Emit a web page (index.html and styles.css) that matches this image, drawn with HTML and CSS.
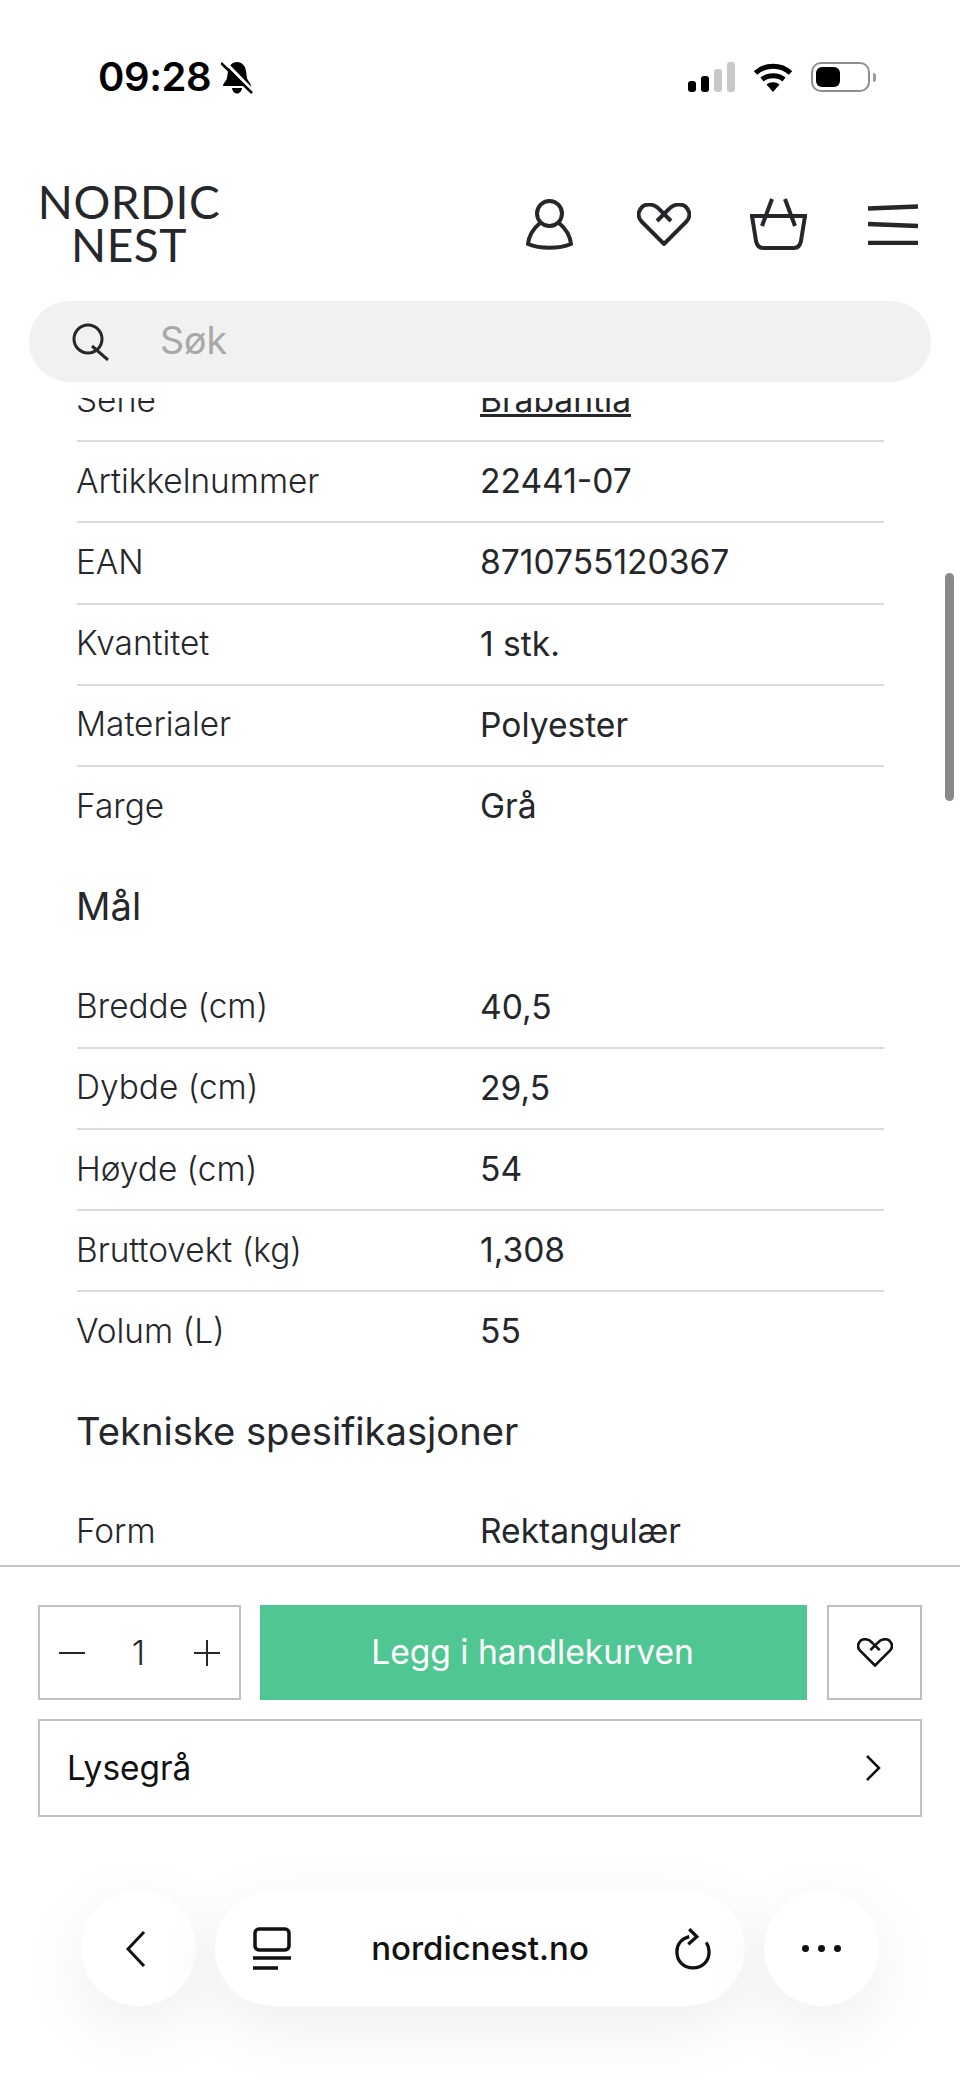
FILE: index.html
```html
<!DOCTYPE html>
<html lang="no">
<head>
    <meta charset="utf-8">
    <title>Nordic Nest</title>
    <link rel="stylesheet" href="styles.css">
</head>
<body>
    <svg class="defs" width="0" height="0">
        <symbol id="heart" viewBox="0 0 54 43">
            <path d="M34 18 L23 7 C17 0 7 0 3.5 6 C0 11 2 16 5 19 L27 41 L49 19 C52 16 54 11 50.5 6 C47 0 37 0 31 7 L20 18"/>
        </symbol>
    </svg>

    <div class="page">
        <div class="status-bar">
            <div class="status-left">
                <span class="clock">09:28</span>
                <svg class="bell" viewBox="0 0 32 33">
                    <path class="fill" d="M16 1 C21 1 24.500 5 25 10 L26 17 C26.500 20 30 22 30 25 L2 25 C2 22 5.500 20 6 17 L7 10 C7.500 5 11 1 16 1 Z M11 27 L21 27 C20.500 31 18 32.500 16 32.500 C14 32.500 11.500 31 11 27 Z"/>
                    <path class="cut" d="M3 0 L33 31"/>
                    <path class="slash" d="M0 2 L31 32"/>
                </svg>
            </div>
            <div class="status-right">
                <div class="signal">
                    <span class="bar bar-1"></span>
                    <span class="bar bar-2"></span>
                    <span class="bar bar-3"></span>
                    <span class="bar bar-4"></span>
                </div>
                <svg class="wifi" viewBox="0 0 40 30">
                    <path d="M2.500 11 C12 2 28 2 37.500 11"/>
                    <path d="M9 17.500 C15 12.500 25 12.500 31 17.500"/>
                    <path class="wifi-dot" d="M13.500 22.500 C17 19.500 23 19.500 26.500 22.500 L20 30 Z"/>
                </svg>
                <div class="battery"><span class="battery-level"></span></div>
                <span class="battery-tip"></span>
            </div>
        </div>

        <header class="site-header">
            <div class="logo">NORDIC
NEST</div>
            <nav class="header-icons">
                <svg class="icon icon-user" viewBox="0 0 47 51">
                    <circle cx="23.500" cy="14.500" r="12.500"/>
                    <path d="M14 24 C8 29 3 36 2 45 C14 50 33 50 45 45 C44 36 39 29 33 24"/>
                </svg>
                <svg class="icon icon-heart"><use href="#heart"/></svg>
                <svg class="icon icon-basket" viewBox="0 0 57 52">
                    <path d="M0 18 L57 18"/>
                    <path d="M2 18 L6 43 C7 48 9 50 13 50 L44 50 C48 50 50 48 51 43 L55 18"/>
                    <path d="M22 1 L12 28"/>
                    <path d="M35 1 L45 28"/>
                </svg>
                <svg class="icon icon-menu" viewBox="0 0 50 41">
                    <path d="M0 4.500 L50 2.500"/>
                    <path d="M0 20 L50 22"/>
                    <path d="M0 39 L50 39"/>
                </svg>
            </nav>
        </header>

        <div class="search">
            <svg class="search-icon" viewBox="0 0 38 38">
                <circle cx="16" cy="16" r="14"/>
                <path d="M20 23 L36 37"/>
            </svg>
            <span class="search-text">Søk</span>
        </div>

        <main class="specs">
            <div class="spec-row"><span class="spec-label">Serie</span><a class="spec-value spec-link">Brabantia</a></div>
            <div class="spec-row"><span class="spec-label">Artikkelnummer</span><span class="spec-value">22441-07</span></div>
            <div class="spec-row"><span class="spec-label">EAN</span><span class="spec-value">8710755120367</span></div>
            <div class="spec-row"><span class="spec-label">Kvantitet</span><span class="spec-value">1 stk.</span></div>
            <div class="spec-row"><span class="spec-label">Materialer</span><span class="spec-value">Polyester</span></div>
            <div class="spec-row"><span class="spec-label">Farge</span><span class="spec-value">Grå</span></div>

            <h2 class="spec-heading">Mål</h2>
            <div class="spec-row"><span class="spec-label">Bredde (cm)</span><span class="spec-value">40,5</span></div>
            <div class="spec-row"><span class="spec-label">Dybde (cm)</span><span class="spec-value">29,5</span></div>
            <div class="spec-row"><span class="spec-label">Høyde (cm)</span><span class="spec-value">54</span></div>
            <div class="spec-row"><span class="spec-label">Bruttovekt (kg)</span><span class="spec-value">1,308</span></div>
            <div class="spec-row"><span class="spec-label">Volum (L)</span><span class="spec-value">55</span></div>

            <h2 class="spec-heading">Tekniske spesifikasjoner</h2>
            <div class="spec-row"><span class="spec-label">Form</span><span class="spec-value">Rektangulær</span></div>
        </main>

        <div class="scrollbar"></div>

        <section class="buy-panel">
            <div class="buy-row">
                <div class="quantity">
                    <svg class="qty-icon" viewBox="0 0 26 26"><path d="M0 13 L26 13"/></svg>
                    <span class="qty-number">1</span>
                    <svg class="qty-icon" viewBox="0 0 26 26"><path d="M0 13 L26 13"/><path d="M13 0 L13 26"/></svg>
                </div>
                <button class="add-button">Legg i handlekurven</button>
                <div class="wish-button">
                    <svg class="icon icon-heart-small"><use href="#heart"/></svg>
                </div>
            </div>
            <div class="variant">
                <span>Lysegrå</span>
                <svg class="variant-arrow" viewBox="0 0 16 26"><path d="M2 1 L14 13 L2 25"/></svg>
            </div>
        </section>

        <footer class="browser-bar">
            <div class="round-button">
                <svg class="back-icon" viewBox="0 0 20 36"><path d="M18 1 L2 18 L18 35"/></svg>
            </div>
            <div class="address">
                <svg class="reader-icon" viewBox="0 0 38 43">
                    <rect x="2" y="2" width="34" height="21" rx="4"/>
                    <path d="M0 31 L38 31"/>
                    <path d="M0 41 L25 41"/>
                </svg>
                <span class="url">nordicnest.no</span>
                <svg class="reload-icon" viewBox="0 0 38 44">
                    <path d="M15 9 C7 11 2 17 2 25 C2 35 9 42 19 42 C29 42 36 35 36 25 C36 21 35 18 33 15"/>
                    <path d="M15 1 L23 9 L14 17"/>
                </svg>
            </div>
            <div class="round-button">
                <div class="dots"><span></span><span></span><span></span></div>
            </div>
        </footer>
    </div>
</body>
</html>
```

FILE: styles.css
```css
* {
    box-sizing: border-box;
}

html, body {
    margin: 0;
    padding: 0;
    background-color: #fff;
}

body {
    font-family: Inter, "Liberation Sans", sans-serif;
    color: #25272a;
}

.defs {
    display: block;
    height: 0;
}

.page {
    position: relative;
    display: flex;
    flex-direction: column;
    width: 960px;
    height: 2087px;
    overflow: hidden;
    background-color: #fff;
}

/* phone status bar */
.status-bar {
    display: flex;
    justify-content: space-between;
    align-items: center;
    height: 62px;
    margin-top: 46px;
    padding: 0 84px 0 98px;
    flex-shrink: 0;
}

.status-left {
    display: flex;
    align-items: center;
    gap: 10px;
}

.clock {
    font-size: 40px;
    font-weight: 600;
    color: #000;
    letter-spacing: -0.4px;
    line-height: 46px;
}

.bell {
    width: 32px;
    height: 33px;
}

.bell .fill {
    fill: #000;
}

.bell .cut {
    stroke: #fff;
    stroke-width: 3;
    fill: none;
}

.bell .slash {
    stroke: #000;
    stroke-width: 2.500;
    fill: none;
}

.status-right {
    display: flex;
    align-items: center;
}

.signal {
    display: flex;
    align-items: flex-end;
    gap: 4.500px;
    height: 30px;
    margin-right: 18px;
}

.bar {
    width: 8.500px;
    border-radius: 3px;
    background-color: #000;
}

.bar-1 {
    height: 11px;
}

.bar-2 {
    height: 16px;
}

.bar-3 {
    height: 23px;
    background-color: #c9c9c9;
}

.bar-4 {
    height: 30px;
    background-color: #c9c9c9;
}

.wifi {
    width: 40px;
    height: 30px;
    margin-right: 18px;
}

.wifi path {
    fill: none;
    stroke: #000;
    stroke-width: 5;
}

.wifi .wifi-dot {
    fill: #000;
    stroke: none;
}

.battery {
    width: 59px;
    height: 30px;
    padding: 3px;
    border: 2px solid #8e8e8e;
    border-radius: 10px;
}

.battery-level {
    display: block;
    width: 24px;
    height: 100%;
    border-radius: 6px;
    background-color: #000;
}

.battery-tip {
    width: 3px;
    height: 9px;
    margin-left: 3px;
    border-radius: 0 3px 3px 0;
    background-color: #9a9a9a;
}

/* site header */
.site-header {
    display: flex;
    justify-content: space-between;
    align-items: center;
    height: 84px;
    margin-top: 74px;
    padding: 0 42px 0 37px;
    flex-shrink: 0;
}

.logo {
    width: 184px;
    margin-top: -2px;
    font-family: Lato, Inter, sans-serif;
    font-size: 46px;
    line-height: 43px;
    letter-spacing: 0.5px;
    text-align: center;
    white-space: pre-line;
    color: #25272a;
}

.header-icons {
    display: flex;
    align-items: center;
}

.icon {
    display: block;
    fill: none;
    stroke: #25272a;
    stroke-width: 4;
}

.icon path, .icon circle, .icon use {
    fill: none;
}

.icon-user {
    width: 47px;
    height: 51px;
}

.icon-heart {
    width: 54px;
    height: 43px;
    margin-left: 64px;
}

.icon-basket {
    width: 57px;
    height: 52px;
    margin-left: 59px;
}

.icon-menu {
    width: 50px;
    height: 41px;
    margin-left: 61px;
    stroke-width: 4.500;
}

/* search */
.search {
    display: flex;
    align-items: center;
    height: 81px;
    margin: 35px 29px 16px 29px;
    padding-left: 43px;
    border-radius: 41px;
    background-color: #f1f1f1;
    flex-shrink: 0;
}

.search-icon {
    width: 38px;
    height: 38px;
    fill: none;
    stroke: #25272a;
    stroke-width: 3;
}

.search-text {
    margin-left: 50px;
    margin-bottom: 2px;
    font-size: 37.500px;
    font-weight: 400;
    color: #a8a8a8;
}

/* spec table */
.specs {
    flex: 1;
    min-height: 0;
    overflow: hidden;
    padding: 0 76px 0 77px;
}

.spec-row {
    display: flex;
    align-items: center;
    height: 81.200px;
    padding-bottom: 2px;
    border-bottom: 2px solid #dddbd9;
    font-size: 33.400px;
}

.spec-row:first-child {
    margin-top: -37px;
}

.spec-row:has(+ .spec-heading) {
    padding-bottom: 4px;
    border-bottom: none;
}

.spec-row:last-child {
    padding-bottom: 4px;
}

.spec-label {
    width: 404px;
    margin-left: -1px;
    font-weight: 300;
}

.spec-value {
    font-size: 33.600px;
    font-weight: 400;
}

.spec-link {
    text-decoration: underline;
}

.spec-heading {
    display: flex;
    align-items: center;
    height: 119.500px;
    margin: 0 0 0 -1px;
    padding-bottom: 4px;
    font-size: 38.200px;
    font-weight: 400;
}

.scrollbar {
    position: absolute;
    top: 573px;
    right: 6px;
    width: 9px;
    height: 228px;
    border-radius: 5px;
    background-color: #8a8a8a;
}

/* add to cart panel */
.buy-panel {
    height: 326px;
    padding: 38px 38px 0;
    border-top: 2px solid #c9c5c1;
    flex-shrink: 0;
}

.buy-row {
    display: flex;
    gap: 19px;
    height: 95px;
    margin-bottom: 19px;
}

.quantity {
    display: flex;
    justify-content: space-between;
    align-items: center;
    width: 203px;
    padding: 0 18.500px;
    border: 2px solid #c4c0bb;
}

.qty-icon {
    width: 26px;
    height: 26px;
    fill: none;
    stroke: #25272a;
    stroke-width: 2;
}

.qty-number {
    margin-right: 2px;
    font-size: 34px;
    font-weight: 300;
}

.add-button {
    flex: 1;
    padding: 0 2px 2px 0;
    border: none;
    background-color: #50c793;
    color: #fff;
    font-family: inherit;
    font-size: 33.600px;
    font-weight: 400;
}

.wish-button {
    display: flex;
    justify-content: center;
    align-items: center;
    width: 95px;
    margin-left: 1px;
    border: 2px solid #bfbfbf;
}

.icon-heart-small {
    width: 36px;
    height: 29px;
    stroke: #111;
    stroke-width: 4;
}

.variant {
    display: flex;
    justify-content: space-between;
    align-items: center;
    height: 98px;
    padding: 0 39px 0 27px;
    border: 2px solid #c4c0bb;
    font-size: 33.400px;
    color: #111;
}

.variant-arrow {
    width: 16px;
    height: 26px;
    fill: none;
    stroke: #111;
    stroke-width: 2.500;
}

/* safari toolbar */
.browser-bar {
    display: flex;
    gap: 19px;
    height: 115px;
    margin-bottom: 81px;
    padding: 0 81px;
    flex-shrink: 0;
}

.round-button, .address {
    display: flex;
    align-items: center;
    height: 115px;
    background-color: #fff;
    box-shadow: 0 20px 70px rgba(0, 0, 0, 0.07);
}

.round-button {
    justify-content: center;
    width: 115px;
    border-radius: 50%;
}

.back-icon {
    width: 20px;
    height: 36px;
    margin-right: 6px;
    fill: none;
    stroke: #111;
    stroke-width: 3;
}

.address {
    flex: 1;
    justify-content: space-between;
    padding: 0 34px 0 38px;
    border-radius: 58px;
}

.reader-icon {
    width: 38px;
    height: 43px;
    fill: none;
    stroke: #111;
    stroke-width: 3.500;
}

.url {
    margin-left: -6px;
    margin-bottom: 2px;
    font-size: 33px;
    font-weight: 500;
    color: #111;
}

.reload-icon {
    width: 36px;
    height: 42px;
    fill: none;
    stroke: #111;
    stroke-width: 3.500;
}

.dots {
    display: flex;
    gap: 9px;
}

.dots span {
    width: 7px;
    height: 7px;
    border-radius: 50%;
    background-color: #111;
}
```
